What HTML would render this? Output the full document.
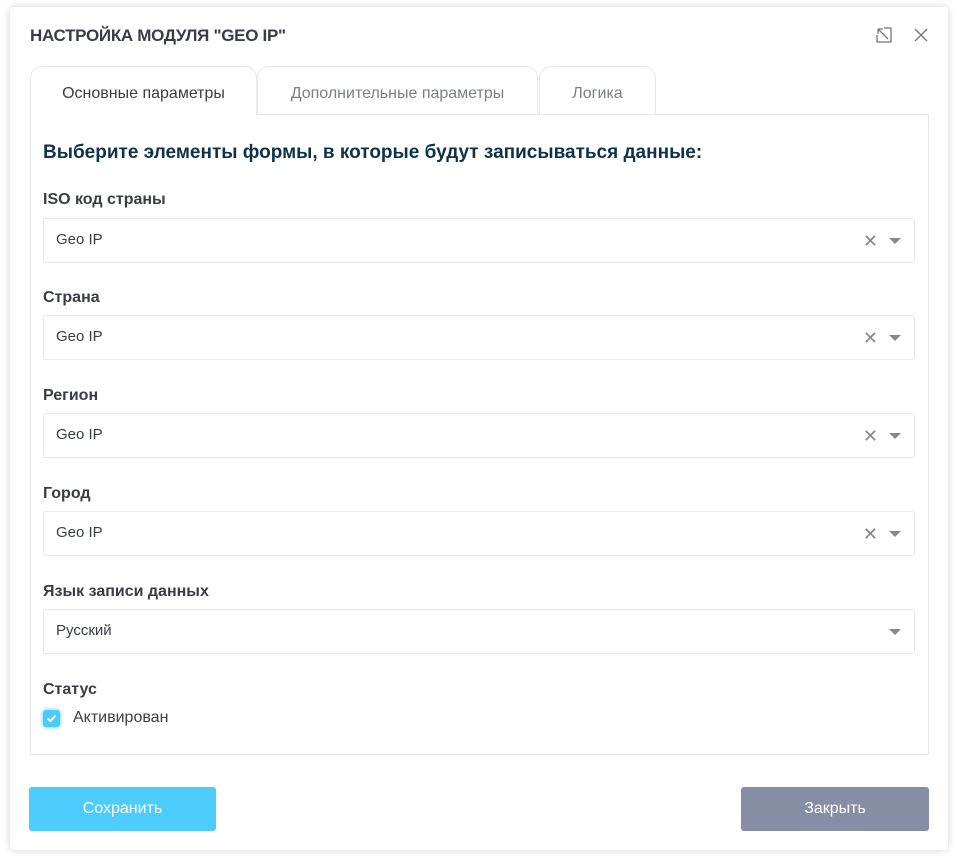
<!DOCTYPE html>
<html><head><meta charset="utf-8"><style>
body{margin:0;width:959px;height:859px;background:#fff;font-family:"Liberation Sans",sans-serif;position:relative;overflow:hidden}
.modal{position:absolute;left:10px;top:7px;width:938px;height:843px;background:#fff;border-radius:4px;box-shadow:0 0 8px rgba(0,0,0,.18)}
.title{position:absolute;left:20px;top:19px;font-size:17px;font-weight:bold;color:#3a3d45;letter-spacing:-0.3px}
.tab{position:absolute;top:59px;height:48px;border:1px solid #e6e8ee;border-bottom:none;border-radius:12px 12px 0 0;box-sizing:border-box;font-size:16px;color:#7a7e88;text-align:center;line-height:54px;background:#fff}
.panel{position:absolute;left:20px;top:107px;width:899px;height:641px;border:1px solid #e6e8ee;box-sizing:border-box}
.h{position:absolute;left:12px;top:27px;font-size:19px;font-weight:bold;color:#0e3347}
.lbl{position:absolute;left:12px;font-size:16px;font-weight:bold;color:#3a3d45}
.sel{position:absolute;left:12px;width:872px;height:45px;border:1px solid #e6e8ee;border-radius:3px;box-sizing:border-box;font-size:15px;color:#3a3d45;line-height:42px;padding-left:12px}
.x{position:absolute;right:36px;top:1px;color:#888;font-size:18px}
.ar{position:absolute;right:13px;top:19px;border-left:6px solid transparent;border-right:6px solid transparent;border-top:6px solid #888}
.btn{position:absolute;top:780px;height:44px;width:187px;border-radius:3px;color:#fff;font-size:16px;text-align:center;line-height:44px}
</style></head><body>
<div class="modal">
<div class="title">НАСТРОЙКА МОДУЛЯ "GEO IP"</div>
<svg style="position:absolute;left:866px;top:20px" width="16" height="16" viewBox="0 0 16 16" fill="none" stroke="#777" stroke-width="1.3"><path d="M1 8V15H15V1H8M2 2L12 12M2 2H7M2 2V7"/></svg>
<svg style="position:absolute;left:904px;top:21px" width="14" height="14" viewBox="0 0 14 14" stroke="#777" stroke-width="1.4"><path d="M1 1L13 13M13 1L1 13"/></svg>
<div class="tab" style="left:20px;width:227px;color:#3a3d45;height:50px;z-index:2">Основные параметры</div>
<div class="tab" style="left:247px;width:281px">Дополнительные параметры</div>
<div class="tab" style="left:529px;width:117px">Логика</div>
<div class="panel">
<div class="h">Выберите элементы формы, в которые будут записываться данные:</div>
<div class="lbl" style="top:76px">ISO код страны</div>
<div class="sel" style="top:103px">Geo IP<span class="x">✕</span><span class="ar"></span></div>
<div class="lbl" style="top:174px">Страна</div>
<div class="sel" style="top:200px">Geo IP<span class="x">✕</span><span class="ar"></span></div>
<div class="lbl" style="top:272px">Регион</div>
<div class="sel" style="top:298px">Geo IP<span class="x">✕</span><span class="ar"></span></div>
<div class="lbl" style="top:370px">Город</div>
<div class="sel" style="top:396px">Geo IP<span class="x">✕</span><span class="ar"></span></div>
<div class="lbl" style="top:468px">Язык записи данных</div>
<div class="sel" style="top:494px">Русский<span class="ar"></span></div>
<div class="lbl" style="top:566px">Статус</div>
<div style="position:absolute;left:12px;top:595px;width:17px;height:17px;background:#4ccbfb;border-radius:3px;box-shadow:0 0 4px #4ccbfb"><svg width="17" height="17" viewBox="0 0 17 17"><path d="M4.5 8.5L7.5 11L12.5 5.5" stroke="#fff" stroke-width="2" fill="none"/></svg></div>
<div class="lbl" style="left:42px;top:594px;font-weight:normal">Активирован</div>
</div>
<div class="btn" style="left:19px;background:#4ccdfe">Сохранить</div>
<div class="btn" style="left:731px;width:188px;background:#858ea5">Закрыть</div>
</div>
</body></html>
